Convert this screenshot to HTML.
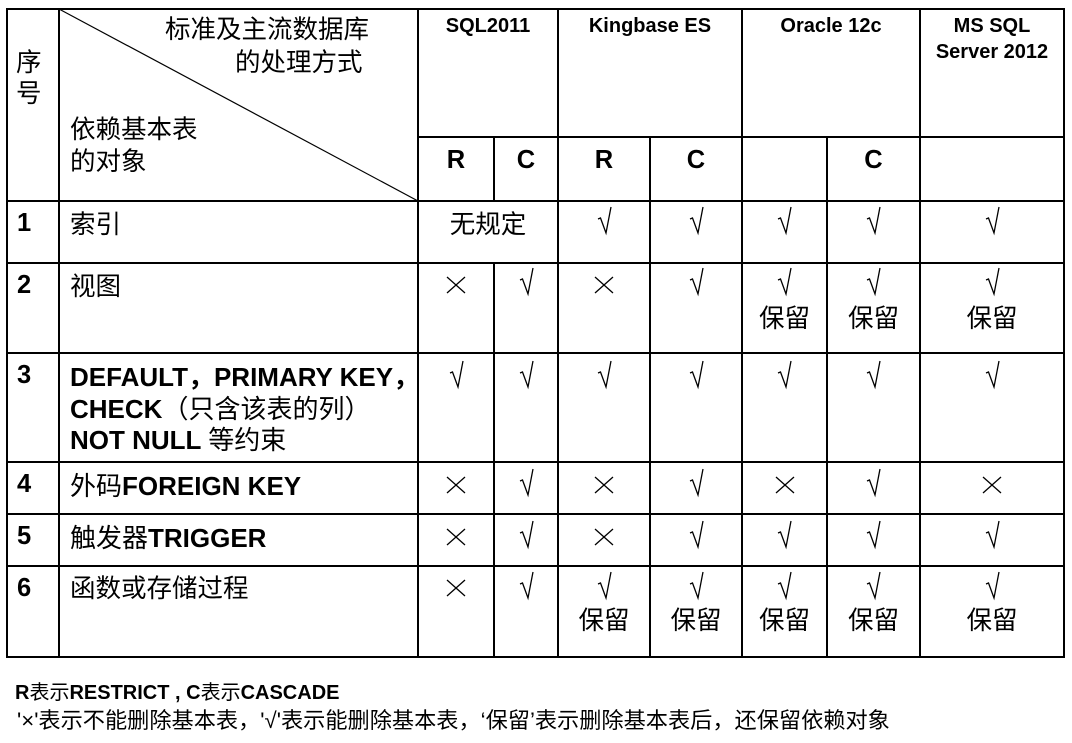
<!DOCTYPE html>
<html><head><meta charset="utf-8"><style>
body{margin:0;width:1072px;height:743px;background:#fff;position:relative;overflow:hidden;font-family:"Liberation Sans","Noto Sans CJK SC",sans-serif;color:#000}
.h{position:absolute;height:2px;background:#000}
.v{position:absolute;width:2px;background:#000}
.t{position:absolute;font-size:25.5px;line-height:32px;white-space:nowrap}
.c{position:absolute;text-align:center;font-size:25.5px;line-height:32px;white-space:nowrap}
.b{font-weight:bold}
.hd{position:absolute;text-align:center;font-weight:bold;font-size:20px;line-height:26px}
</style></head><body>
<div class="h" style="left:6px;top:8px;width:1059px"></div>
<div class="h" style="left:418px;top:136px;width:647px"></div>
<div class="h" style="left:6px;top:200px;width:1059px"></div>
<div class="h" style="left:6px;top:262px;width:1059px"></div>
<div class="h" style="left:6px;top:352px;width:1059px"></div>
<div class="h" style="left:6px;top:461px;width:1059px"></div>
<div class="h" style="left:6px;top:513px;width:1059px"></div>
<div class="h" style="left:6px;top:565px;width:1059px"></div>
<div class="h" style="left:6px;top:656px;width:1059px"></div>
<div class="v" style="left:6px;top:8px;height:650px"></div>
<div class="v" style="left:58px;top:8px;height:650px"></div>
<div class="v" style="left:417px;top:8px;height:650px"></div>
<div class="v" style="left:493px;top:136px;height:66px"></div>
<div class="v" style="left:493px;top:262px;height:396px"></div>
<div class="v" style="left:557px;top:8px;height:650px"></div>
<div class="v" style="left:649px;top:136px;height:522px"></div>
<div class="v" style="left:741px;top:8px;height:650px"></div>
<div class="v" style="left:826px;top:136px;height:522px"></div>
<div class="v" style="left:919px;top:8px;height:650px"></div>
<div class="v" style="left:1063px;top:8px;height:650px"></div>
<svg style="position:absolute;left:0;top:0" width="1072" height="743"><line x1="59" y1="9" x2="418" y2="201" stroke="#000" stroke-width="1.2"/></svg>

<div class="t" style="left:16px;top:48px;line-height:31px">序<br>号</div>
<div class="t" style="left:165px;top:14px">标准及主流数据库</div>
<div class="t" style="left:235px;top:47px">的处理方式</div>
<div class="t" style="left:70px;top:114px">依赖基本表<br>的对象</div>

<div class="hd" style="left:418px;width:140px;top:13px">SQL2011</div>
<div class="hd" style="left:558px;width:184px;top:13px">Kingbase ES</div>
<div class="hd" style="left:742px;width:178px;top:13px">Oracle 12c</div>
<div class="hd" style="left:920px;width:144px;top:13px">MS SQL<br>Server 2012</div>

<div class="c b" style="left:418px;width:76px;top:144px">R</div>
<div class="c b" style="left:494px;width:64px;top:144px">C</div>
<div class="c b" style="left:558px;width:92px;top:144px">R</div>
<div class="c b" style="left:650px;width:92px;top:144px">C</div>
<div class="c b" style="left:827px;width:93px;top:144px">C</div>

<div class="t b" style="left:17px;top:207px">1</div>
<div class="t b" style="left:17px;top:269px">2</div>
<div class="t b" style="left:17px;top:359px">3</div>
<div class="t b" style="left:17px;top:468px">4</div>
<div class="t b" style="left:17px;top:520px">5</div>
<div class="t b" style="left:17px;top:572px">6</div>

<div class="t" style="left:70px;top:209px">索引</div>
<div class="t" style="left:70px;top:271px">视图</div>
<div class="t b" style="left:70px;top:362px;line-height:31.5px;font-size:26px">DEFAULT，PRIMARY KEY，<br>CHECK<span style="font-weight:normal">（只含该表的列）</span><br>NOT NULL <span style="font-weight:normal">等约束</span></div>
<div class="t" style="left:70px;top:470px;font-size:26px">外码<b>FOREIGN KEY</b></div>
<div class="t" style="left:70px;top:522px;font-size:26px">触发器<b>TRIGGER</b></div>
<div class="t" style="left:70px;top:573px">函数或存储过程</div>

<div class="c" style="left:418px;width:140px;top:209px">无规定</div>

<svg width="1072" height="743" style="position:absolute;left:0;top:0" fill="none" stroke="#000" stroke-width="1.3">
<defs>
<path id="k" d="M0,12 L2.5,11 L8,26 L13,0"/>
<path id="x" d="M-9,-8 L9,8 M-9,8 L9,-8"/>
</defs>
<use href="#k" x="598" y="207"/><use href="#k" x="690" y="207"/><use href="#k" x="778" y="207"/><use href="#k" x="867" y="207"/><use href="#k" x="986" y="207"/>
<use href="#x" x="456" y="285"/><use href="#k" x="520" y="268"/><use href="#x" x="604" y="285"/><use href="#k" x="690" y="268"/><use href="#k" x="778" y="268"/><use href="#k" x="867" y="268"/><use href="#k" x="986" y="268"/>
<use href="#k" x="450" y="361"/><use href="#k" x="520" y="361"/><use href="#k" x="598" y="361"/><use href="#k" x="690" y="361"/><use href="#k" x="778" y="361"/><use href="#k" x="867" y="361"/><use href="#k" x="986" y="361"/>
<use href="#x" x="456" y="485"/><use href="#k" x="520" y="469"/><use href="#x" x="604" y="485"/><use href="#k" x="690" y="469"/><use href="#x" x="785" y="485"/><use href="#k" x="867" y="469"/><use href="#x" x="992" y="485"/>
<use href="#x" x="456" y="537"/><use href="#k" x="520" y="521"/><use href="#x" x="604" y="537"/><use href="#k" x="690" y="521"/><use href="#k" x="778" y="521"/><use href="#k" x="867" y="521"/><use href="#k" x="986" y="521"/>
<use href="#x" x="456" y="588"/><use href="#k" x="520" y="572"/><use href="#k" x="598" y="572"/><use href="#k" x="690" y="572"/><use href="#k" x="778" y="572"/><use href="#k" x="867" y="572"/><use href="#k" x="986" y="572"/>
</svg>

<div class="c" style="left:742px;width:85px;top:303px">保留</div>
<div class="c" style="left:827px;width:93px;top:303px">保留</div>
<div class="c" style="left:920px;width:144px;top:303px">保留</div>
<div class="c" style="left:558px;width:92px;top:605px">保留</div>
<div class="c" style="left:650px;width:92px;top:605px">保留</div>
<div class="c" style="left:742px;width:85px;top:605px">保留</div>
<div class="c" style="left:827px;width:93px;top:605px">保留</div>
<div class="c" style="left:920px;width:144px;top:605px">保留</div>

<div class="t" style="left:15px;top:680px;font-size:20px;line-height:26px"><b>R</b>表示<b>RESTRICT , C</b>表示<b>CASCADE</b></div>
<div class="t" style="left:17px;top:707px;font-size:22.2px;line-height:28px">'×'表示不能删除基本表，'√'表示能删除基本表，‘保留’表示删除基本表后，还保留依赖对象</div>
</body></html>
